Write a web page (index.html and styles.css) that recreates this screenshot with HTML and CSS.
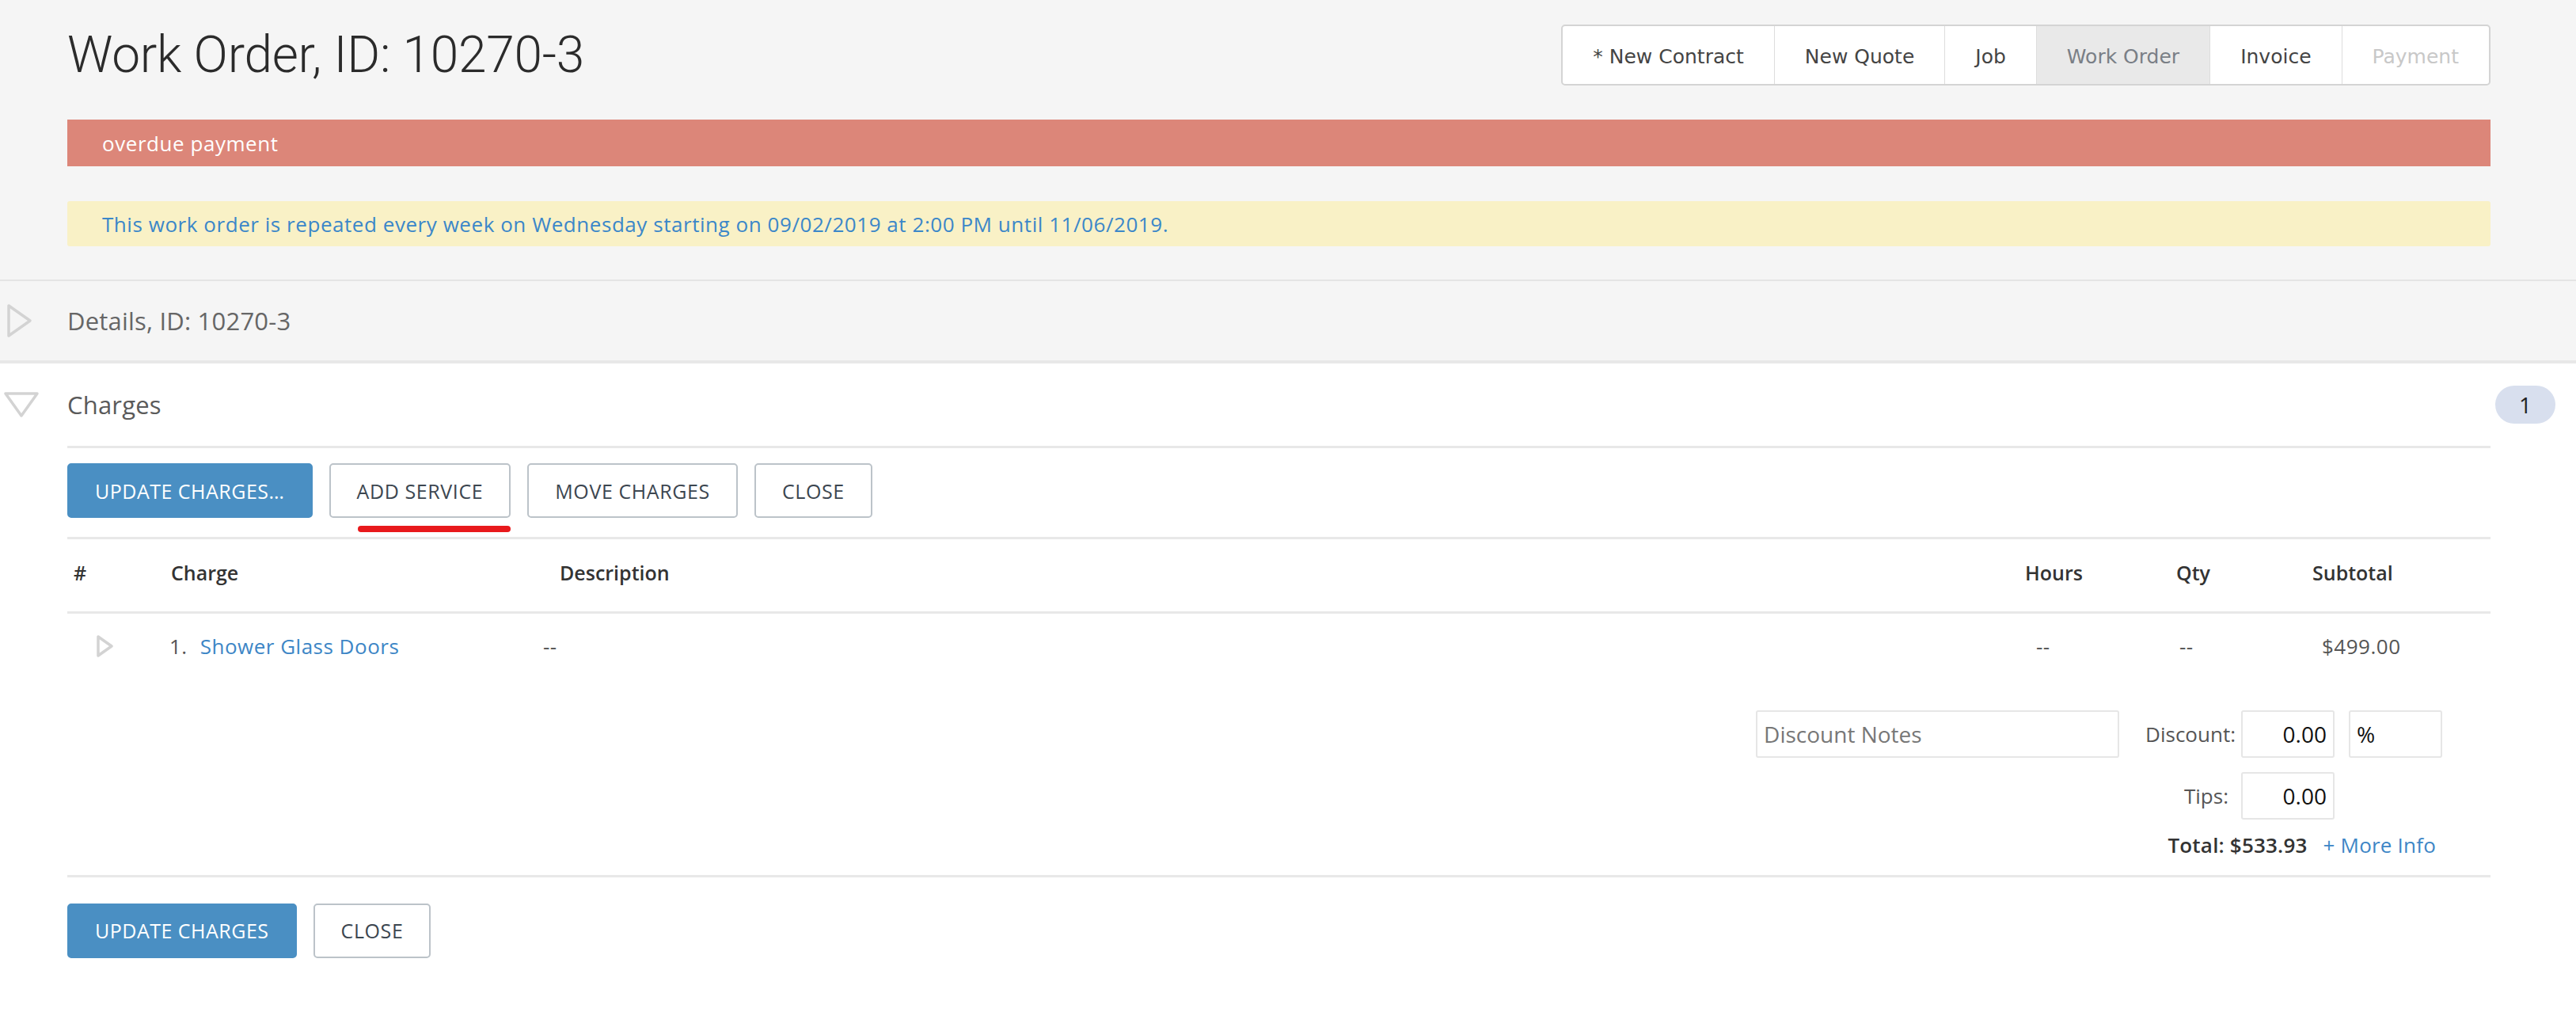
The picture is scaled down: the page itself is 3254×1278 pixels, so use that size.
FILE: index.html
```html
<html>

<head>
  <title>Work Order, ID: 10270-3</title>
  <link rel="stylesheet" href="styles.css">
</head>

<body>

  <header class="page-head">
    <div class="title-row">
      <h1>Work Order, ID: 10270-3</h1>
      <nav class="doc-tabs">
        <a class="tab">* New Contract</a>
        <a class="tab">New Quote</a>
        <a class="tab">Job</a>
        <a class="tab current">Work Order</a>
        <a class="tab">Invoice</a>
        <a class="tab disabled">Payment</a>
      </nav>
    </div>
    <div class="alert alert-danger">overdue payment</div>
    <div class="alert alert-info">This work order is repeated every week on Wednesday starting on 09/02/2019 at 2:00 PM until 11/06/2019.</div>
  </header>

  <section class="panel collapsed">
    <div class="panel-head">
      <svg class="caret" width="34" height="44" viewBox="0 0 34 44">
        <polygon points="3,3 30,22 3,41" />
      </svg>
      <span class="panel-title">Details, ID: 10270-3</span>
    </div>
  </section>

  <section class="panel open">
    <div class="panel-head">
      <svg class="caret" width="46" height="34" viewBox="0 0 46 34">
        <polygon points="3,3 43,3 23,31" />
      </svg>
      <span class="panel-title">Charges</span>
      <span class="count">1</span>
    </div>

    <div class="panel-body">
      <div class="toolbar">
        <button class="btn btn-primary">UPDATE CHARGES…</button>
        <button class="btn marked">ADD SERVICE</button>
        <button class="btn">MOVE CHARGES</button>
        <button class="btn">CLOSE</button>
      </div>

      <table class="charges">
        <colgroup>
          <col class="c-num">
          <col class="c-charge">
          <col class="c-desc">
          <col class="c-hours">
          <col class="c-qty">
          <col class="c-sub">
        </colgroup>
        <thead>
          <tr>
            <th>#</th>
            <th>Charge</th>
            <th class="desc">Description</th>
            <th>Hours</th>
            <th>Qty</th>
            <th>Subtotal</th>
          </tr>
        </thead>
        <tbody>
          <tr>
            <td class="expand">
              <svg width="22" height="28" viewBox="0 0 22 28">
                <polygon points="2,2 19,14 2,26" />
              </svg>
            </td>
            <td class="charge"><span class="idx">1.</span><a class="link">Shower Glass Doors</a></td>
            <td class="desc">--</td>
            <td class="hours">--</td>
            <td class="qty">--</td>
            <td class="sub">$499.00</td>
          </tr>
        </tbody>
      </table>

      <div class="totals">
        <div class="totals-row">
          <input class="field notes" type="text" placeholder="Discount Notes">
          <label class="lbl">Discount:</label>
          <input class="field amount" type="text" value="0.00">
          <input class="field unit" type="text" value="%">
        </div>
        <div class="totals-row tips">
          <label class="lbl">Tips:</label>
          <input class="field amount" type="text" value="0.00">
        </div>
        <div class="totals-row total">
          <span class="sum">Total: $533.93</span>
          <a class="link">+ More Info</a>
        </div>
      </div>

      <div class="toolbar bottom">
        <button class="btn btn-primary">UPDATE CHARGES</button>
        <button class="btn">CLOSE</button>
      </div>
    </div>
  </section>

</body>

</html>
```

FILE: styles.css
```css
body {
  margin: 0;
  background: #fff;
  font-family: "Open Sans", "Noto Sans", sans-serif;
  color: #444;
}

.page-head {
  background: #f5f5f5;
  padding: 31px 108px 42px 85px;
}

.title-row {
  display: flex;
  align-items: center;
  justify-content: space-between;
}

h1 {
  margin: 0;
  font-family: Roboto, "Liberation Sans", sans-serif;
  font-weight: 300;
  font-size: 64px;
  letter-spacing: -0.25px;
  color: #2b2b2b;
}

.doc-tabs {
  display: flex;
  height: 77px;
  box-sizing: border-box;
  border: 2px solid #d4d4d4;
  border-radius: 5px;
  background: #fff;
  overflow: hidden;
}

.tab {
  display: flex;
  align-items: center;
  padding: 3px 38px 0;
  font-family: "DejaVu Sans", sans-serif;
  font-size: 25px;
  color: #444;
  border-left: 1px solid #ddd;
}

.tab:first-child {
  border-left: none;
}

.tab.current {
  background: #e9e9e9;
  color: #7a7f86;
}

.tab.disabled {
  color: #c8c8c8;
}

.alert {
  display: flex;
  align-items: center;
  padding: 0 44px;
  font-size: 26px;
  letter-spacing: 0.55px;
}

.alert-danger {
  margin-top: 43px;
  height: 59px;
  background: #dc8679;
  color: #fff;
}

.alert-info {
  margin-top: 44px;
  height: 57px;
  background: #f9f1c6;
  color: #3b87c9;
  border-radius: 3px;
}

.panel-head {
  display: flex;
  align-items: center;
  padding-left: 85px;
  position: relative;
}

.collapsed .panel-head {
  height: 100px;
  background: #f5f5f5;
  border-top: 2px solid #e4e4e4;
  border-bottom: 4px solid #e8e8e8;
}

.open .panel-head {
  height: 104px;
}

.caret {
  position: absolute;
  left: 8px;
}

.open .caret {
  left: 4px;
}

.caret polygon,
.expand polygon {
  fill: none;
  stroke: #d3d3d3;
  stroke-width: 3.5;
  stroke-linejoin: round;
}

.panel-title {
  font-size: 31px;
  letter-spacing: 0.2px;
  color: #666;
}

.open .panel-title {
  color: #5a5a5a;
}

.count {
  margin-left: auto;
  margin-right: 26px;
  width: 76px;
  height: 48px;
  border-radius: 24px;
  background: #d8dfee;
  color: #222;
  font-size: 28px;
  display: flex;
  align-items: center;
  justify-content: center;
}

.panel-body {
  margin: 0 108px 0 85px;
  border-top: 3px solid #e8e8e8;
}

.toolbar {
  display: flex;
  gap: 21px;
  padding: 19px 0 24px;
}

.toolbar.bottom {
  padding: 33px 0 69px;
  border-top: 3px solid #e8e8e8;
}

.btn {
  height: 69px;
  padding: 0 33px;
  font-family: "Open Sans", "Noto Sans", sans-serif;
  font-size: 25px;
  letter-spacing: 0.6px;
  color: #3c4650;
  background: #fff;
  border: 2px solid #bcc3c9;
  border-radius: 5px;
  position: relative;
}

.btn-primary {
  background: #4a8fc3;
  border-color: #4a8fc3;
  color: #fff;
  letter-spacing: 0.5px;
}

/* red marker under the button */
.btn.marked::after {
  content: "";
  position: absolute;
  left: 34px;
  right: -2px;
  bottom: -20px;
  height: 8px;
  border-radius: 4px;
  background: #e8191c;
}

.charges {
  width: 100%;
  border-collapse: collapse;
  table-layout: fixed;
  border-top: 3px solid #e8e8e8;
}

.c-num { width: 123px; }
.c-charge { width: 472px; }
.c-desc { width: 1870px; }
.c-hours { width: 191px; }
.c-qty { width: 172px; }
.c-sub { width: 233px; }

th {
  height: 94px;
  padding: 0 0 8px 8px;
  text-align: left;
  font-size: 25px;
  font-weight: 600;
  color: #333;
  border-bottom: 3px solid #e8e8e8;
}

th.desc {
  padding-left: 27px;
}

td {
  height: 78px;
  padding: 6px 0 0;
  font-size: 26px;
  letter-spacing: 0.5px;
  color: #555;
}

td.expand { padding-left: 37px; }
td.charge { padding-left: 6px; }
td.desc { padding-left: 6px; }
td.hours { padding-left: 22px; }
td.qty { padding-left: 12px; }
td.sub { padding-left: 20px; }

.idx {
  margin-right: 16px;
}

.link {
  color: #3d86c6;
}

.totals {
  display: flex;
  flex-direction: column;
  align-items: flex-end;
  gap: 18px;
  padding: 45px 61px 20px 0;
}

.totals-row {
  display: flex;
  align-items: center;
}

.field {
  box-sizing: border-box;
  height: 60px;
  border: 2px solid #e6e6e6;
  border-radius: 3px;
  font-family: "Open Sans", "Noto Sans", sans-serif;
  font-size: 28px;
  color: #111;
  padding: 0 8px;
  background: #fff;
}

.field::placeholder {
  color: #777;
}

.notes {
  width: 459px;
  margin-right: 33px;
}

.lbl {
  font-size: 26px;
  color: #555;
  margin-right: 7px;
}

.amount {
  width: 118px;
  text-align: right;
}

.unit {
  width: 118px;
  margin-left: 18px;
}

.tips {
  margin-right: 136px;
}

.tips .lbl {
  margin-right: 16px;
}

.total {
  margin-top: -4px;
  margin-right: 8px;
  gap: 20px;
  font-size: 26px;
  letter-spacing: 0.2px;
}

.sum {
  font-weight: 600;
  color: #333;
}
```
